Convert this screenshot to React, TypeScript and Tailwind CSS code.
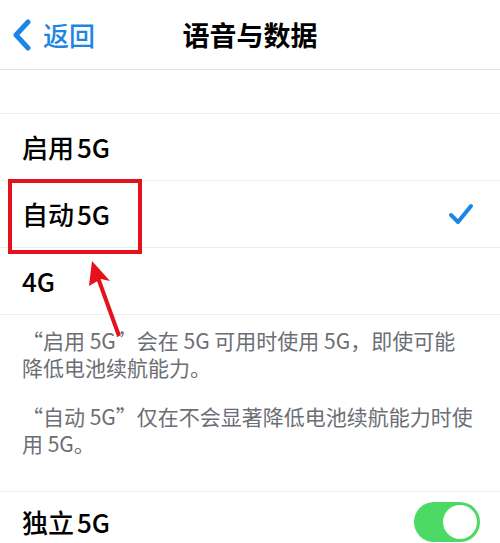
import React from "react";

const font = { fontFamily: '"Noto Sans CJK SC", "Noto Sans", sans-serif' };

function Label({ cn, latin }: { cn: string; latin: string }) {
  return (
    <span>
      {cn}
      <span className="ml-[3px]">{latin}</span>
    </span>
  );
}

function Row({ children, right }: { children: React.ReactNode; right?: React.ReactNode }) {
  return (
    <div className="flex h-[67px] items-center justify-between border-b border-[#ececec] pl-[22px] pr-[26px]">
      <div className="text-[26px] font-medium leading-none text-black">{children}</div>
      {right}
    </div>
  );
}

export default function App() {
  return (
    <div className="relative h-[543px] w-[500px] overflow-hidden bg-white" style={font}>
      {/* Nav bar */}
      <div className="relative flex h-[70px] items-center border-b border-[#e3e3e3]">
        <div className="flex items-center pl-[12px] text-[#1c86e6]">
          <svg width="20" height="32" viewBox="0 0 20 32" fill="none">
            <path d="M16 3 L4 16 L16 29" stroke="#1c86e6" strokeWidth="5" strokeLinecap="round" strokeLinejoin="round" />
          </svg>
          <span className="ml-[11px] text-[26px] font-medium leading-none">返回</span>
        </div>
        <div className="absolute left-0 right-0 text-center text-[27px] font-bold leading-none text-black">语音与数据</div>
      </div>

      <div className="h-[44px] border-b border-[#f0f0f0]" />

      <Row>
        <Label cn="启用" latin="5G" />
      </Row>
      <Row
        right={
          <svg width="26" height="24" viewBox="0 0 26 24" fill="none">
            <path d="M3 13 L10 20 L23 4" stroke="#1c86e6" strokeWidth="4" strokeLinecap="round" strokeLinejoin="round" />
          </svg>
        }
      >
        <Label cn="自动" latin="5G" />
      </Row>
      <Row>4G</Row>

      {/* Footer text */}
      <div className="whitespace-nowrap border-b border-[#ececec] pb-[34px] pl-[22px] pt-[12px] text-[21px] leading-[27px] text-[#6b6e75]">
        <p>
          “启用 5G”会在 5G 可用时使用 5G，即使可能
          <br />
          降低电池续航能力。
        </p>
        <p className="mt-[22px]">
          “自动 5G”仅在不会显著降低电池续航能力时使
          <br />
          用 5G。
        </p>
      </div>

      <div className="flex h-[60px] items-center justify-between pl-[22px] pr-[20px]">
        <div className="text-[26px] font-medium leading-none text-black">
          <Label cn="独立" latin="5G" />
        </div>
        <div className="flex h-[40px] w-[66px] items-center justify-end rounded-full bg-[#4cd964] p-[3px]">
          <div className="h-[34px] w-[34px] rounded-full bg-white" />
        </div>
      </div>

      {/* Annotation overlay */}
      <div className="absolute left-[8px] top-[179px] h-[75px] w-[134px] border-[4px] border-[#e3121b]" />
      <svg className="absolute left-0 top-0" width="500" height="543" viewBox="0 0 500 543">
        <line x1="119" y1="336" x2="97" y2="275" stroke="#e3121b" strokeWidth="4" />
        <polygon points="92,261 110,281 101,279 89,286" fill="#e3121b" />
      </svg>
    </div>
  );
}
